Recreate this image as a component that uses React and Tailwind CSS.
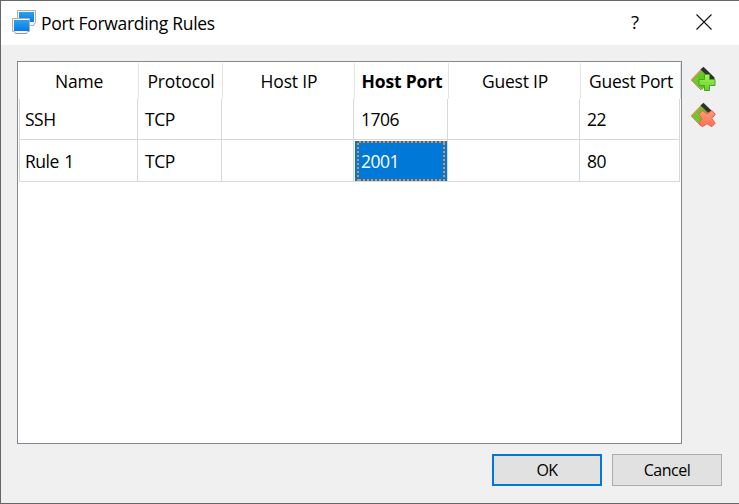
import React from "react";

const columns = [
  { label: "Name", width: "w-[120px]", cell: "w-[118px]", inset: "pl-[5px]", text: "pl-px tracking-[-0.2px]" },
  { label: "Protocol", width: "w-[84px]", cell: "w-[84px]", inset: "pl-[7px]", text: "pl-px tracking-[-0.15px]" },
  { label: "Host IP", width: "w-[132px]", cell: "w-[132px]", inset: "pl-[7px]", text: "pl-px tracking-[-0.15px]" },
  { label: "Host Port", width: "w-[94px]", cell: "w-[94px]", inset: "pl-[7px]", text: "pl-px font-bold tracking-[-0.15px]" },
  { label: "Guest IP", width: "w-[132px]", cell: "w-[132px]", inset: "pl-[7px]", text: "pl-px tracking-[-0.2px]" },
  { label: "Guest Port", width: "w-[100px]", cell: "w-[100px]", inset: "pl-[7px]", text: "pl-px tracking-[-0.3px]" },
];

const rules = [
  { height: "h-[41px]", values: ["SSH", "TCP", "", "1706", "", "22"] },
  { height: "h-[42px]", values: ["Rule 1", "TCP", "", "2001", "", "80"] },
];

function AppIcon() {
  return (
    <svg className="h-[26px] w-[26px] shrink-0" viewBox="0 0 26 26">
      <defs>
        <linearGradient id="screen" x1="0" y1="0" x2="0" y2="1">
          <stop offset="0" stopColor="#27a4ef" />
          <stop offset="1" stopColor="#0a78ec" />
        </linearGradient>
      </defs>
      <path d="M6.5 0.5h18v12.5l-1.5 1v1.5h-16.500z" fill="#f4f4f4" stroke="#b0b0b0" />
      <rect x="8" y="2" width="15" height="10" fill="url(#screen)" />
      <path d="M1.5 8.5h17v13h-2l-1 2h-11l-1-2h-2z" fill="#f7f7f7" stroke="#b0b0b0" />
      <path d="M4.5 23.5h11" stroke="#989898" />
      <rect x="3" y="10" width="15" height="11" fill="url(#screen)" />
    </svg>
  );
}

function RuleIcon({ remove }) {
  return (
    <svg className="h-[26px] w-[26px]" viewBox="0 0 26 26">
      <defs>
        <linearGradient id="leaf" x1="0" y1="0" x2="1" y2="1">
          <stop offset="0" stopColor="#72cc2d" />
          <stop offset="1" stopColor="#55b91d" />
        </linearGradient>
        <linearGradient id="plus" x1="0" y1="0" x2="0" y2="1">
          <stop offset="0" stopColor="#a8f455" />
          <stop offset="1" stopColor="#62d026" />
        </linearGradient>
        <linearGradient id="cross" x1="0" y1="0" x2="0" y2="1">
          <stop offset="0" stopColor="#ff9a80" />
          <stop offset="1" stopColor="#ff7050" />
        </linearGradient>
      </defs>
      <path d="M1.5 14 12.5 2.5 22 12 12 24z" fill="url(#leaf)" />
      <path d="M1.5 14 12.5 2.5" stroke="#e08a58" strokeWidth="1.4" />
      <path d="M1.5 14 11 24" stroke="#ba7040" strokeWidth="1" />
      <path d="M4 13.5l8 8M6 11.5l7 7" stroke="#8ae03e" strokeWidth="0.7" />
      <path d="M10.5 3.5 13.5 0.8 24.5 11.5v2.5h-3z" fill="#303030" />
      {remove ? (
        <path
          d="M12.5 8.5 17 12 21.8 8.5 25.2 12.2 21.8 16.7 25.2 21.2 21.8 24.7 17 21.7 12.3 24.7 8.7 21.3 12.2 16.7 8.7 12.2z"
          fill="url(#cross)"
          stroke="#e2604a"
          strokeLinejoin="round"
        />
      ) : (
        <path d="M14.5 8.500h5v5h5.500v6h-5.500v5h-5v-5h-5.500v-6h5.500z" fill="url(#plus)" stroke="#46a522" strokeLinejoin="round" />
      )}
    </svg>
  );
}

function TitleBar() {
  return (
    <header className="flex h-11 items-center bg-white pl-[10px]">
      <AppIcon />
      <h1 className="ml-1 grow pb-px text-[17.5px] leading-6 tracking-[-0.3px]">Port Forwarding Rules</h1>
      <button className="w-[30px] pb-0.5 text-center text-[18.5px] leading-6">?</button>
      <button className="mr-[27px] ml-[46px] pb-0.5" aria-label="Close">
        <svg className="h-4 w-4" viewBox="0 0 16 16">
          <path d="M.5.5l15 15M15.5.5l-15 15" stroke="#111" strokeWidth="1.1" />
        </svg>
      </button>
    </header>
  );
}

function Cell({ value, column, selected, height }) {
  return (
    <td className={`${column.cell} ${height} border-r border-b border-[#d8d8d8] p-0`}>
      {selected ? (
        <div className="mt-px ml-px flex h-10 bg-[#0078d7] pr-0.5 pl-0.5">
          <div className="grid w-[88px] grid-cols-1 grid-rows-1">
            <svg className="col-start-1 row-start-1 h-10 w-[88px]" viewBox="0 0 88 40" shapeRendering="crispEdges">
              <path d="M2 1h86M2 39h86" stroke="#f68b35" strokeWidth="2" strokeDasharray="2 2" />
              <path d="M1 2v38M87 2v38" stroke="#f68b35" strokeWidth="2" strokeDasharray="2 2" />
            </svg>
            <span className="col-start-1 row-start-1 self-center pl-1 text-white">{value}</span>
          </div>
        </div>
      ) : (
        <div className={column.inset}>{value}</div>
      )}
    </td>
  );
}

export default function App() {
  return (
    <div className="h-[504px] w-[739px] overflow-hidden border-t border-b border-l border-[#666] bg-[#f0f0f0] font-['Open_Sans','Noto_Sans',sans-serif] text-black">
      <TitleBar />
      <main className="pt-4 pl-4">
        <div className="flex">
          <section className="h-[383px] w-[665px] border border-[#828790] bg-white pt-px pl-px">
            <div className="flex h-9 text-[17.5px]">
              {columns.map((c) => (
                <div key={c.label} className={`${c.width} flex shrink-0 items-center justify-center border-r border-[#e5e5e5] pt-px whitespace-nowrap ${c.text}`}>
                  {c.label}
                </div>
              ))}
            </div>
            <table className="w-[661px] table-fixed border-separate border-spacing-0 border-l border-[#d8d8d8] text-[17.5px] leading-6 tracking-[-0.5px] [word-spacing:1.5px]">
              <tbody>
                {rules.map((rule, r) => (
                  <tr key={rule.values[0]}>
                    {columns.map((c, i) => (
                      <Cell key={c.label} value={rule.values[i]} column={c} selected={r === 1 && i === 3} height={rule.height} />
                    ))}
                  </tr>
                ))}
              </tbody>
            </table>
          </section>
          <aside className="ml-2 flex flex-col gap-[10px] pt-[5px]">
            <button aria-label="Add rule"><RuleIcon /></button>
            <button aria-label="Remove rule"><RuleIcon remove /></button>
          </aside>
        </div>
        <footer className="mt-[10px] mr-[17px] flex justify-end gap-[10px] text-[16px] leading-6 tracking-[-0.5px]">
          <button className="h-8 w-[110px] border-2 border-[#0078d7] bg-[#e1e1e1]">OK</button>
          <button className="h-8 w-[110px] border border-[#adadad] bg-[#e1e1e1]">Cancel</button>
        </footer>
      </main>
    </div>
  );
}
